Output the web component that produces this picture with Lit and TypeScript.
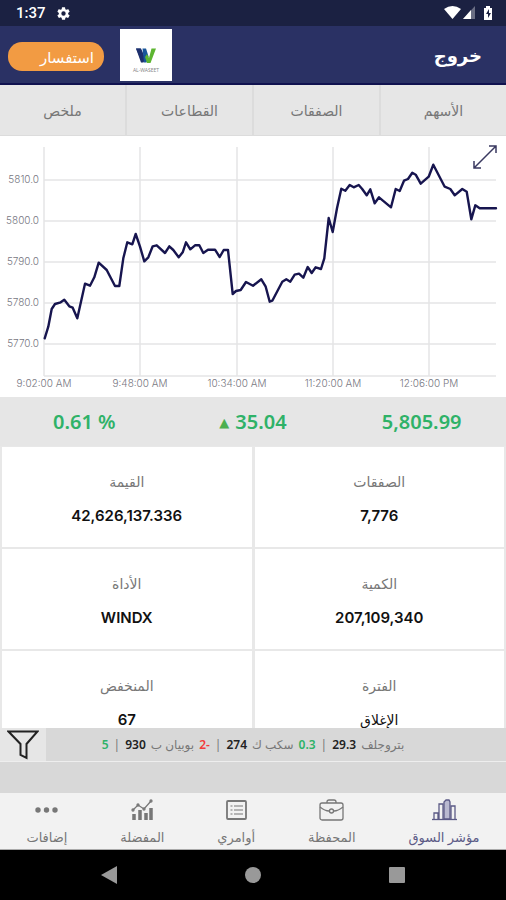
import { LitElement, html, svg, css } from "lit";
import { customElement } from "lit/decorators.js";

const POINTS: number[][] = [
  [134, 607], [145, 572], [155, 519], [165, 504], [182, 499], [193, 491], [208, 511], [218, 515], [232, 547],
  [255, 443], [270, 449], [283, 424], [296, 380], [320, 402], [345, 450], [358, 450], [370, 367], [382, 319],
  [397, 325], [407, 294], [420, 332], [433, 376], [445, 364], [458, 331], [470, 328], [495, 351], [508, 331],
  [520, 342], [536, 364], [548, 349], [558, 319], [571, 340], [585, 328], [598, 328], [610, 351], [624, 341],
  [645, 341], [659, 363], [671, 342], [684, 342], [698, 474], [708, 465], [722, 462], [738, 438], [759, 449],
  [784, 430], [797, 452], [809, 497], [817, 494], [847, 437], [859, 430], [871, 437], [884, 416], [897, 413],
  [910, 425], [923, 393], [935, 411], [947, 394], [963, 399], [973, 367], [986, 246], [998, 288], [1011, 217],
  [1024, 158], [1036, 164], [1049, 147], [1061, 154], [1076, 147], [1086, 158], [1100, 178], [1111, 160],
  [1124, 202], [1137, 184], [1173, 214], [1187, 159], [1199, 165], [1212, 134], [1224, 129], [1237, 110],
  [1247, 116], [1262, 143], [1286, 122], [1300, 86], [1334, 152], [1351, 159], [1364, 178], [1387, 159],
  [1400, 167], [1414, 250], [1426, 208], [1439, 217], [1488, 217],
];
const LINE = POINTS.map(([x, y]) => `${(x / 3).toFixed(1)},${(y / 3).toFixed(1)}`).join(" ");

const Y_TICKS = [
  { y: 44, label: "5810.0" },
  { y: 85, label: "5800.0" },
  { y: 126, label: "5790.0" },
  { y: 167, label: "5780.0" },
  { y: 208, label: "5770.0" },
];
const X_TICKS = [
  { x: 44, label: "9:02:00 AM" },
  { x: 140, label: "9:48:00 AM" },
  { x: 237, label: "10:34:00 AM" },
  { x: 333, label: "11:20:00 AM" },
  { x: 429, label: "12:06:00 PM" },
];

const STATS = [
  ["الصفقات", "7,776"],
  ["القيمة", "42,626,137.336"],
  ["الكمية", "207,109,340"],
  ["الأداة", "WINDX"],
  ["الفترة", "الإغلاق"],
  ["المنخفض", "67"],
];

const TICKER = [
  { name: "بتروجلف", price: "29.3", change: "0.3" },
  { name: "سكب ك", price: "274", change: "-2" },
  { name: "بوبيان ب", price: "930", change: "5" },
];

const NAV = [
  {
    label: "مؤشر السوق",
    icon: svg`<path d="M0 20.500h25" /><path d="M2 20v-6h4v6M7 20V5h4v15M19 20V7h4v13" /><path d="M12 20V3l2-2h3l1 2v17z" fill="#b9b9d0" />`,
  },
  {
    label: "المحفظة",
    icon: svg`<rect x="1" y="4" width="23" height="17" rx="2" /><path d="M8 4V3q0-2 2-2h5q2 0 2 2v1M1 8q5 4 9 4M24 8q-5 4-9 4" /><circle cx="12.500" cy="12" r="2" />`,
  },
  {
    label: "أوامري",
    icon: svg`<rect x="3" y="2" width="19" height="18" rx="1" stroke-width="1.800" /><path d="M6.500 7h2M10 7h9M6.500 11h2M10 11h9M6.500 15h2M10 15h9" stroke-width="1" />`,
  },
  {
    label: "المفضلة",
    icon: svg`<path d="M4 21v-6M10 21v-10M16 21v-7M21 21V9" stroke-width="3.500" /><path d="M3 11l5-5 6 4 7-8" /><circle cx="3" cy="11" r="1" /><circle cx="8" cy="6" r="1" /><circle cx="14" cy="10" r="1" /><circle cx="21" cy="2" r="1" />`,
  },
  {
    label: "إضافات",
    icon: svg`<g fill="currentColor" stroke="none"><circle cx="4" cy="11" r="2.700" /><circle cx="12.500" cy="11" r="2.700" /><circle cx="21" cy="11" r="2.700" /></g>`,
  },
];

@customElement("app-root")
export class AppRoot extends LitElement {
  static styles = css`
    :host {
      display: flex;
      flex-direction: column;
      height: 100vh;
      overflow: hidden;
      background: #d8d8d8;
      color: #777;
      font-family: "Noto Sans", "DejaVu Sans", sans-serif;
      font-size: 14px;
    }
    * { box-sizing: border-box; }
    button {
      border: 0;
      padding: 0;
      background: none;
      color: inherit;
      font: inherit;
      cursor: pointer;
    }
    svg { display: block; }
    .status {
      flex: none;
      display: flex;
      align-items: center;
      gap: 10px;
      height: 26px;
      padding: 0 12px 0 16px;
      background: #1b2142;
      color: #fff;
      font: 500 15px/26px Roboto, sans-serif;
    }
    .signals { margin-left: auto; }
    .header {
      flex: none;
      display: flex;
      align-items: center;
      height: 59px;
      padding: 0 8px;
      background: #2a3164;
      border-bottom: 2px solid #10124f;
      color: #fff;
    }
    .inquiry {
      width: 96px;
      height: 29px;
      margin-top: 4px;
      padding-right: 10px;
      border-radius: 14px;
      background: #f29b43;
      font-size: 15px;
      text-align: right;
    }
    .logo { margin-left: 16px; }
    .logo text { font: 5px "Noto Sans", sans-serif; fill: #888; }
    .exit {
      margin-left: auto;
      margin-right: 16px;
      font-size: 18px;
      font-weight: 700;
    }
    .tabs {
      flex: none;
      display: grid;
      grid-template-columns: repeat(4, 1fr);
      gap: 2px;
      height: 51px;
      background: #dcdcdc;
      border-bottom: 1px solid #dcdcdc;
    }
    .tab { background: #e6e6e6; }
    .content { flex: 1; min-height: 0; overflow: hidden; background: #fff; }
    .chart { position: relative; }
    .plot { width: 100%; height: auto; }
    .plot text { font: 300 10px Inter, sans-serif; fill: #77777f; }
    .grid-line { stroke: #e4e4e6; stroke-width: 1.5; }
    .series {
      fill: none;
      stroke: #17154f;
      stroke-width: 2.4;
      stroke-linejoin: round;
      stroke-linecap: round;
    }
    .expand { position: absolute; top: 8px; right: 8px; }
    .summary {
      display: grid;
      grid-template-columns: repeat(3, 1fr);
      height: 49px;
      align-items: center;
      background: #e6e6e6;
      color: #2fb268;
      font-size: 20px;
      line-height: 24px;
      font-weight: 600;
      text-align: center;
    }
    .up { font-size: 13px; color: #4caf50; margin-right: 6px; vertical-align: 2px; }
    .stats {
      display: grid;
      grid-template-columns: 1fr 1fr;
      grid-auto-rows: 100px;
      gap: 2px 3px;
      margin: 0;
      padding: 1px 2px;
      background: #e8e8e8;
    }
    .stat { padding-top: 23px; background: #fff; text-align: center; }
    .stat dt { line-height: 24px; }
    .stat dd {
      margin: 14px 0 0;
      color: #111;
      font: 600 15px/16px Inter, "DejaVu Sans", sans-serif;
    }
    .stat .word { font-size: 14px; font-weight: 400; }
    .ticker {
      flex: none;
      display: flex;
      height: 34px;
      background: #d8d8d8;
      border-bottom: 1px solid #eee;
    }
    .filter { flex: none; width: 46px; padding-left: 7px; background: #e6e6e6; }
    .quotes {
      flex: 1;
      display: flex;
      justify-content: center;
      align-items: center;
      gap: 5px;
      padding-right: 46px;
      font-size: 12px;
      white-space: nowrap;
    }
    .price { color: #222; font-weight: 600; }
    .gain { color: #2fb268; font-weight: 600; }
    .loss { color: #f23b3b; font-weight: 600; }
    .nav {
      flex: none;
      display: flex;
      height: 57px;
      margin-top: 31px;
      background: #f2f2f2;
      border-bottom: 1px solid #aaa;
    }
    .nav-item {
      flex: 1 1 auto;
      display: flex;
      flex-direction: column;
      align-items: center;
      gap: 6px;
      padding-top: 6px;
      font-size: 13px;
      line-height: 20px;
      white-space: nowrap;
    }
    .current { color: #5b5a86; }
    .system {
      flex: none;
      display: flex;
      justify-content: space-between;
      align-items: center;
      height: 50px;
      padding: 0 20%;
      background: #000;
    }
  `;

  render() {
    return html`
      <div class="status">
        <span>1:37</span>
        <svg width="15" height="15" viewBox="0 0 24 24" fill="#fff"><path d="M19.400 13a7 7 0 0 0 0-2l2.200-1.700a.5.5 0 0 0 .1-.6l-2-3.500a.5.5 0 0 0-.6-.2l-2.500 1a7 7 0 0 0-1.700-1L14.500 2.400A.5.5 0 0 0 14 2h-4a.5.5 0 0 0-.5.4L9.100 5a7 7 0 0 0-1.700 1l-2.500-1a.5.5 0 0 0-.6.2l-2 3.500a.5.5 0 0 0 .1.6L4.600 11a7 7 0 0 0 0 2l-2.200 1.700a.5.5 0 0 0-.1.6l2 3.500c.1.2.4.3.6.2l2.500-1a7 7 0 0 0 1.700 1l.4 2.600c0 .2.2.4.5.4h4c.3 0 .5-.2.5-.4l.4-2.600a7 7 0 0 0 1.700-1l2.500 1c.2.1.5 0 .6-.2l2-3.500a.5.5 0 0 0-.1-.6zM12 15.500a3.500 3.500 0 1 1 0-7 3.500 3.500 0 0 1 0 7z" /></svg>
        <svg class="signals" width="51" height="16" viewBox="0 0 51 16" fill="#fff">
          <path d="M1 4Q9.500-2 18 4L9.500 14z" />
          <path d="M32 1v13H20z" opacity=".35" /><path d="M28 5v9h-8z" />
          <path d="M43 1h4v2h2v12h-8V3h2z" /><path d="M46 4l-3 5h2v4l3-5h-2z" fill="#1b2142" />
        </svg>
      </div>
      <header class="header">
        <button class="inquiry" dir="rtl">استفسار</button>
        <svg class="logo" width="52" height="52" viewBox="0 0 52 52" role="img" aria-label="AL WASEET">
          <rect width="52" height="52" fill="#fff" />
          <path d="M16 19.500h4.500l3.500 9-2 5z" fill="#1d3f7d" />
          <path d="M16 19.500h5l4.500 10-2 4h-2.500z" fill="#1d2f6d" />
          <path d="M22.500 19.500H26l2.500 8-2 6h-2.500z" fill="#18569a" />
          <path d="M31.500 19.500H36l-5.500 14.500h-3.500l-2-6 2-3 2 4z" fill="#5db531" />
          <text x="26" y="43" text-anchor="middle">AL-WASEET</text>
        </svg>
        <button class="exit">خروج</button>
      </header>
      <nav class="tabs" dir="rtl">
        ${["الأسهم", "الصفقات", "القطاعات", "ملخص"].map((t) => html`<button class="tab">${t}</button>`)}
      </nav>
      <main class="content">
        <div class="chart">
          <svg class="plot" viewBox="0 0 506 261">
            ${Y_TICKS.map(
              (t) => svg`<line class="grid-line" x1="44" x2="496" y1=${t.y} y2=${t.y} />
                <text x="39" y=${t.y + 3} text-anchor="end">${t.label}</text>`
            )}
            ${X_TICKS.map(
              (t) => svg`<line class="grid-line" x1=${t.x} x2=${t.x} y1="11" y2="240" />
                <text x=${t.x} y="251" text-anchor="middle">${t.label}</text>`
            )}
            <line class="grid-line" x1="44" x2="496" y1="240" y2="240" />
            <polyline class="series" points=${LINE} />
          </svg>
          <button class="expand" aria-label="تكبير">
            <svg width="26" height="26" viewBox="0 0 26 26" fill="none" stroke="#3a3960" stroke-width="1.500"><path d="M2 24L24 2M17 2h7v7M2 17v7h7" /></svg>
          </button>
        </div>
        <div class="summary">
          <span>0.61 %</span>
          <span><span class="up">▲</span>35.04</span>
          <span>5,805.99</span>
        </div>
        <dl class="stats" dir="rtl">
          ${STATS.map(
            ([k, v]) => html`<div class="stat"><dt>${k}</dt><dd class=${/[0-9A-Z]/.test(v) ? "" : "word"}>${v}</dd></div>`
          )}
        </dl>
      </main>
      <div class="ticker">
        <button class="filter" aria-label="تصفية">
          <svg width="32" height="30" viewBox="0 0 32 30" fill="none" stroke="#222" stroke-width="2"><path d="M1.500 1.500h29L19.500 14v14l-6-3V14z" /></svg>
        </button>
        <div class="quotes" dir="rtl">
          ${TICKER.map(
            (q) => html`<span>${q.name}</span><span class="price">${q.price}</span><span>|</span
              ><span class=${q.change.startsWith("-") ? "loss" : "gain"}>${q.change}</span>`
          )}
        </div>
      </div>
      <nav class="nav" dir="rtl">
        ${NAV.map(
          (n, i) => html`<button class="nav-item ${i === 0 ? "current" : ""}">
            <svg width="25" height="22" viewBox="0 0 25 22" fill="none" stroke="currentColor" stroke-width="1.300">${n.icon}</svg>
            <span>${n.label}</span>
          </button>`
        )}
      </nav>
      <div class="system">
        <svg width="16" height="18" viewBox="0 0 16 18" fill="#999"><path d="M16 0v18L0 9z" /></svg>
        <svg width="16" height="16" viewBox="0 0 16 16" fill="#999"><circle cx="8" cy="8" r="8" /></svg>
        <svg width="16" height="16" viewBox="0 0 16 16" fill="#999"><rect width="16" height="16" rx="1" /></svg>
      </div>
    `;
  }
}
